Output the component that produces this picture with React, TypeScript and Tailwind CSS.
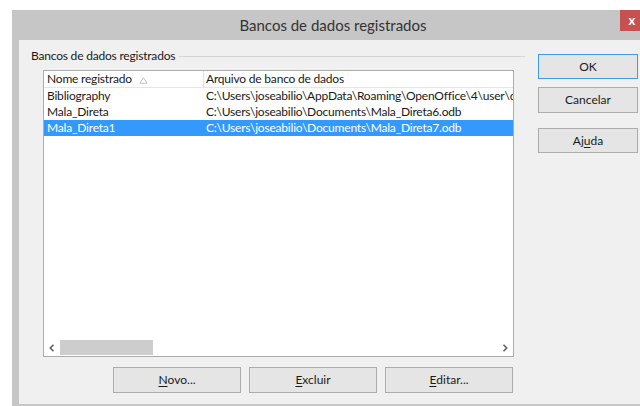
import { Fragment } from "react";

type Entry = { name: string; path: string; selected?: boolean };

const ENTRIES: Entry[] = [
  {
    name: "Bibliography",
    path: "C:\\Users\\joseabilio\\AppData\\Roaming\\OpenOffice\\4\\user\\database\\biblio.odb",
  },
  { name: "Mala_Direta", path: "C:\\Users\\joseabilio\\Documents\\Mala_Direta6.odb" },
  { name: "Mala_Direta1", path: "C:\\Users\\joseabilio\\Documents\\Mala_Direta7.odb", selected: true },
];

const FONT = "font-['Lato','Open_Sans',sans-serif]";

function Mnemonic({ text, at }: { text: string; at: number }) {
  return (
    <Fragment>
      {text.slice(0, at)}
      <span className="underline underline-offset-2">{text[at]}</span>
      {text.slice(at + 1)}
    </Fragment>
  );
}

function Button({
  children,
  primary,
  className = "",
}: {
  children: React.ReactNode;
  primary?: boolean;
  className?: string;
}) {
  return (
    <button
      className={`flex items-center justify-center border bg-[#e5e5e5] text-[12px] text-[#1a1a1a] ${
        primary ? "border-[#3c9be6]" : "border-[#acacac]"
      } ${className}`}
    >
      {children}
    </button>
  );
}

function SortArrow() {
  return (
    <svg width="9" height="7" viewBox="0 0 9 7" className="ml-[7px] mt-[2px]">
      <path d="M4.5 0.8 L8.2 6.3 H0.8 Z" fill="none" stroke="#c2c2c2" strokeWidth="1" />
    </svg>
  );
}

function ScrollBar() {
  return (
    <div className="flex h-[17px] items-stretch bg-white">
      <div className="flex w-[16px] items-center justify-center">
        <svg width="6" height="8" viewBox="0 0 6 8">
          <path d="M4.5 0.8 L1.3 4 L4.5 7.2" fill="none" stroke="#606060" strokeWidth="1.6" />
        </svg>
      </div>
      <div className="my-[1px] w-[93px] bg-[#cdcdcd]" />
      <div className="flex-1" />
      <div className="flex w-[16px] items-center justify-center">
        <svg width="6" height="8" viewBox="0 0 6 8">
          <path d="M1.5 0.8 L4.7 4 L1.5 7.2" fill="none" stroke="#606060" strokeWidth="1.6" />
        </svg>
      </div>
    </div>
  );
}

function DatabaseList() {
  return (
    <div className="ml-[12px] mt-[6px] flex h-[287px] w-[471px] flex-col border border-[#acacac] bg-white tracking-[-0.2px]">
      <div className="flex h-[17px] shrink-0 border-b border-[#e5e5e5] text-[12px] leading-[16px] text-[#1a1a1a]">
        <div className="flex w-[160px] items-center border-r border-[#e0e0e0] pl-[3px]">
          Nome registrado
          <SortArrow />
        </div>
        <div className="pl-[2px]">Arquivo de banco de dados</div>
      </div>
      {ENTRIES.map((e) => (
        <div
          key={e.name}
          className={`flex h-[16px] shrink-0 text-[12px] leading-[16px] whitespace-nowrap ${
            e.selected ? "bg-[#3399ff] text-white" : "text-[#1a1a1a]"
          }`}
        >
          <div className="w-[160px] overflow-hidden pl-[3px]">{e.name}</div>
          <div className="flex-1 overflow-hidden pl-[2px]">{e.path}</div>
        </div>
      ))}
      <div className="flex-1" />
      <ScrollBar />
    </div>
  );
}

export default function App() {
  return (
    <div className={`h-[406px] w-[640px] overflow-hidden bg-white ${FONT}`}>
      <div className="ml-[12px] mt-[10px] flex h-[396px] w-[642px] flex-col bg-[#c6c6c6]">
        {/* title bar */}
        <div className="relative flex h-[30px] shrink-0 items-center justify-center">
          <span className="text-[15px] text-[#333333]">Bancos de dados registrados</span>
          <div className="absolute right-[14px] top-0 flex h-[21px] w-[20px] items-center justify-center bg-[#c75050] pl-[4px] text-[13px] font-bold text-white">
            x
          </div>
        </div>

        {/* client area */}
        <div className="mb-[2px] ml-[7px] flex flex-1 bg-[#f0f0f0] pl-[12px] pt-[8px]">
          <div className="flex w-[494px] flex-col">
            <div className="flex h-[16px] items-center text-[12px] tracking-[-0.2px] text-[#1a1a1a]">
              <span>Bancos de dados registrados</span>
              <div className="ml-[4px] h-px flex-1 bg-[#d5d5d5]" />
            </div>

            <DatabaseList />

            <div className="ml-[82px] mt-[10px] flex gap-[8px]">
              <Button className="h-[26px] w-[128px]">
                <Mnemonic text="Novo..." at={0} />
              </Button>
              <Button className="h-[26px] w-[128px]">
                <Mnemonic text="Excluir" at={0} />
              </Button>
              <Button className="h-[26px] w-[128px]">
                <Mnemonic text="Editar..." at={0} />
              </Button>
            </div>
          </div>

          <div className="ml-[13px] mt-[6px] flex flex-col">
            <Button primary className="h-[25px] w-[100px]">
              OK
            </Button>
            <Button className="mt-[8px] h-[26px] w-[100px]">Cancelar</Button>
            <Button className="mt-[15px] h-[25px] w-[100px]">
              <Mnemonic text="Ajuda" at={2} />
            </Button>
          </div>
        </div>
      </div>
    </div>
  );
}
